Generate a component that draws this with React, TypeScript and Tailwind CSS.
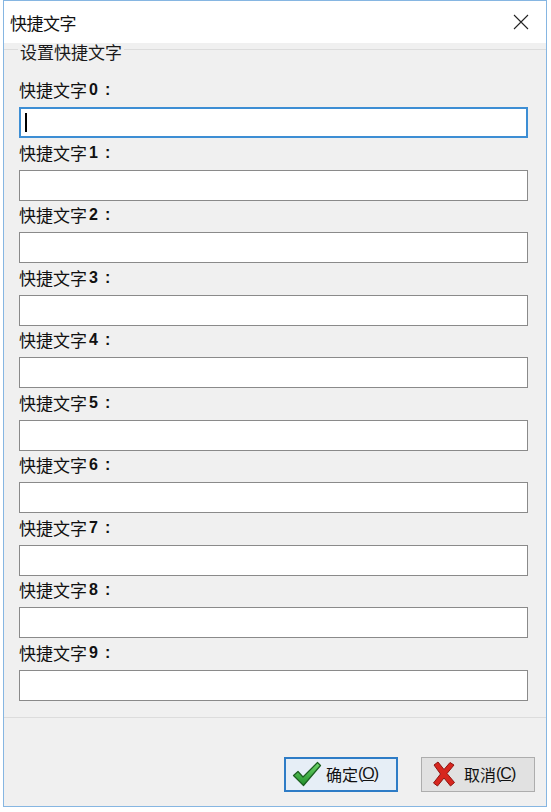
import React from "react";

const cjk = { fontFamily: '"Noto Sans CJK SC", "Noto Sans", sans-serif' };

function Check() {
  return (
    <svg width="30" height="26" viewBox="0 0 30 26">
      <defs>
        <linearGradient id="g" x1="0" y1="0" x2="0" y2="1">
          <stop offset="0" stopColor="#6fd66a" />
          <stop offset="1" stopColor="#1f8f2a" />
        </linearGradient>
      </defs>
      <path
        d="M1.5 14.5 L6 10.5 L11 16 L25.5 1.5 L28.5 4.5 L11.5 24.5 Z"
        fill="url(#g)"
        stroke="#1b5e20"
        strokeWidth="1.2"
        strokeLinejoin="round"
      />
    </svg>
  );
}

function Cross() {
  return (
    <svg width="24" height="26" viewBox="0 0 24 26">
      <path
        d="M2 4 L6 1 L12 8.5 L18 1.5 L22 4 L15 12.5 L22.5 21.5 L18.5 25 L12 17 L5.5 25 L1.5 22 L8.5 13 Z"
        fill="#d7261e"
        stroke="#8e1410"
        strokeWidth="1"
        strokeLinejoin="round"
      />
    </svg>
  );
}

export default function App() {
  const rows = [0, 1, 2, 3, 4, 5, 6, 7, 8, 9];
  const latin = { fontFamily: '"Liberation Sans", Arial, sans-serif' };
  return (
    <div className="w-[551px] h-[812px] bg-white overflow-hidden" style={cjk}>
      <div className="ml-[3px] w-[544px] h-[807px] border border-[#86b6e2] flex flex-col">
        <div className="h-[42px] bg-white flex items-center justify-between pl-[6px] pr-[17px]">
          <span className="text-[17px] leading-none text-[#111] tracking-[-0.5px]">快捷文字</span>
          <svg width="16" height="16" viewBox="0 0 16 16">
            <path d="M1 1 L15 15 M15 1 L1 15" stroke="#222" strokeWidth="1.1" />
          </svg>
        </div>
        <div className="flex-1 bg-[#f0f0f0] flex flex-col">
          <div className="relative mt-[6px] border-t border-b border-[#dcdcdc] pt-[25.5px] pb-[16px] pl-[15px] pr-[18px]">
            <span className="absolute left-[14px] top-[-7px] bg-[#f0f0f0] px-[2px] text-[17px] leading-[18px] text-[#1a1a1a]">
              设置快捷文字
            </span>
            {rows.map((i) => (
              <div key={i}>
                <div className="h-[31.5px] flex items-end pb-[7px]">
                  <span className="text-[17px] leading-[20px] text-[#111] flex items-center">
                    快捷文字
                    <span className="font-bold text-[16px] ml-[2px]" style={latin}>
                      {i}
                    </span>
                    <span className="font-bold text-[16px] ml-[7px]" style={latin}>
                      :
                    </span>
                  </span>
                </div>
                {i === 0 ? (
                  <div className="h-[31px] bg-white border-2 border-[#3d8ed4] flex items-center pl-[4px]">
                    <div className="w-[1.5px] h-[19px] bg-black" />
                  </div>
                ) : (
                  <div className="h-[31px] bg-white border border-[#8a8a8a]" />
                )}
              </div>
            ))}
          </div>
          <div className="flex justify-end gap-[23px] mt-[39px] pr-[11px]">
            <div className="w-[114px] h-[35px] border-2 border-[#2e7cc6] bg-[#e6eef6] flex items-center pl-[6px] gap-[4px]">
              <Check />
              <span className="text-[16px] leading-none text-[#111] flex items-center">
                确定
                <span className="text-[16px] tracking-[-1px]" style={latin}>
                  (<span className="underline">O</span>)
                </span>
              </span>
            </div>
            <div className="w-[114px] h-[35px] border border-[#adadad] bg-[#e1e1e1] flex items-center pl-[10px] gap-[8px]">
              <Cross />
              <span className="text-[16px] leading-none text-[#111] flex items-center">
                取消
                <span className="text-[16px] tracking-[-1px]" style={latin}>
                  (<span className="underline">C</span>)
                </span>
              </span>
            </div>
          </div>
        </div>
      </div>
    </div>
  );
}
